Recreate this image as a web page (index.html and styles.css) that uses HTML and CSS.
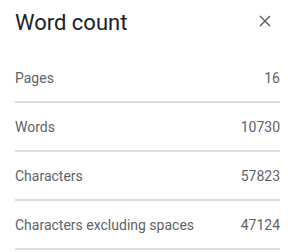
FILE: index.html
```html
<!DOCTYPE html>
<html>
  <head>
    <title>Word count</title>
    <link rel="stylesheet" href="styles.css">
  </head>
<body>
  <main class="dialog">
    <header class="dialog-head">
      <h1>Word count</h1>
      <button class="close" type="button" aria-label="Close">
        <svg width="12" height="12" viewBox="0 0 12 12">
          <path d="M1 1 L11 11 M11 1 L1 11" stroke="#5f6368" stroke-width="1.5" fill="none" />
        </svg>
      </button>
    </header>

    <ul class="stats">
      <li><span>Pages</span><span>16</span></li>
      <li><span>Words</span><span>10730</span></li>
      <li><span>Characters</span><span>57823</span></li>
      <li><span>Characters excluding spaces</span><span>47124</span></li>
    </ul>
  </main>
</body>
</html>
```

FILE: styles.css
```css
body {
  margin: 0;
  background: white;
  font-family: Roboto, "Liberation Sans", sans-serif;
}

.dialog {
  width: 290px;
  padding: 0 10px 0 15px;
  box-sizing: border-box;
}

.dialog-head {
  display: flex;
  align-items: flex-start;
  justify-content: space-between;
  height: 54px;
  padding-top: 10px;
  box-sizing: border-box;
}

.dialog-head h1 {
  margin: 0;
  font-size: 22px;
  line-height: 26px;
  font-weight: 400;
  color: #202124;
}

.close {
  border: 0;
  background: none;
  padding: 0;
  margin-top: 5px;
  margin-right: 9px;
  width: 12px;
  height: 12px;
  cursor: pointer;
}

.close svg {
  display: block;
}

.stats {
  list-style: none;
  margin: 0;
  padding: 0;
}

.stats li {
  display: flex;
  justify-content: space-between;
  align-items: center;
  height: 47px;
  border-bottom: 2px solid #dadce0;
  font-size: 14px;
  color: #5f6368;
}
```
